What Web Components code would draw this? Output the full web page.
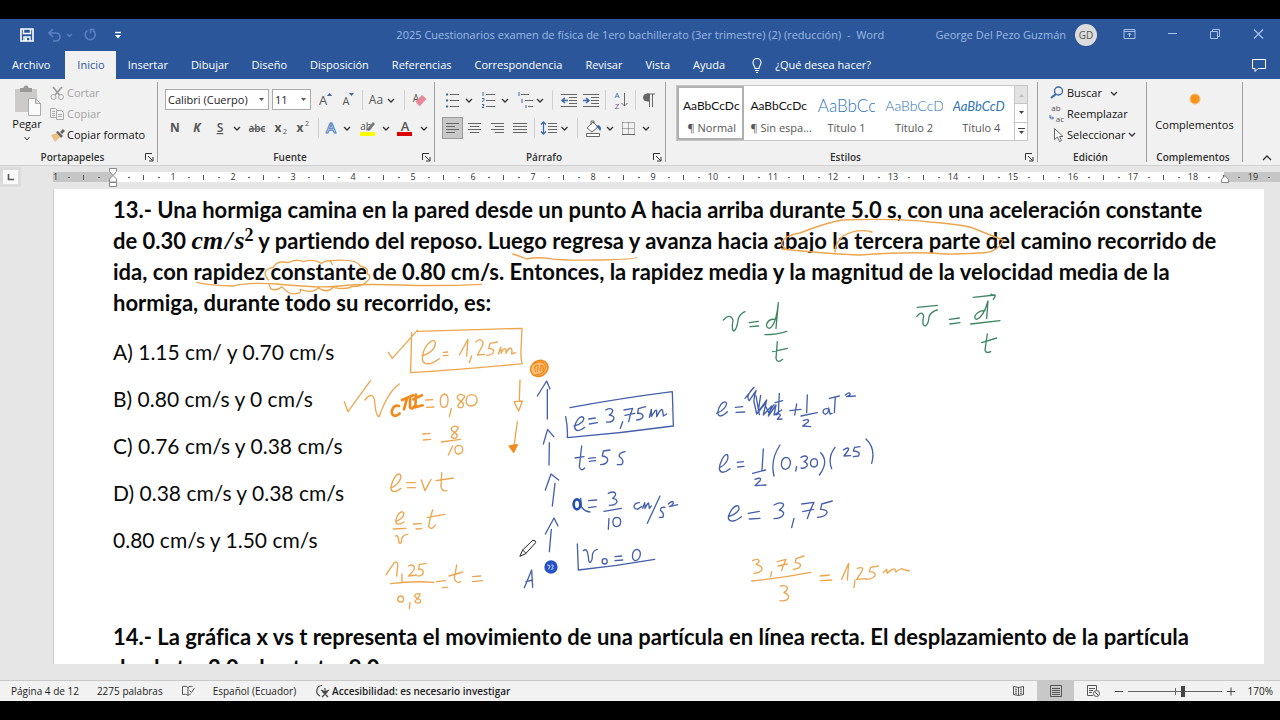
<!DOCTYPE html>
<html lang="es">
<head>
<meta charset="utf-8">
<title>Word</title>
<style>
  body { margin: 0; background: #000; font: 11px/16px "Open Sans", "Noto Sans", sans-serif; color: #222; }
</style>
</head>
<body>
<word-app></word-app>
<script>
const BASE = `
  * { box-sizing: border-box; }
  button { font: inherit; color: inherit; background: none; border: 0; margin: 0; padding: 0; display: flex; align-items: center; justify-content: center; flex: none; }
  svg { display: block; flex: none; overflow: visible; }
`;
function define(name, css, html) {
  customElements.define(name, class extends HTMLElement {
    constructor() {
      super();
      this.attachShadow({ mode: 'open' });
    }
    connectedCallback() {
      if (this.shadowRoot.childNodes.length) return;
      this.shadowRoot.innerHTML = `<style>${BASE}${css}</style>${typeof html === 'function' ? html(this) : html}`;
    }
  });
}
const svg = (w, h, body) => `<svg width="${w}" height="${h}" viewBox="0 0 ${w} ${h}" fill="none" stroke="#666" aria-hidden="true">${body}</svg>`;
const CHEV = (w = 12) => svg(w, 20, `<path d="M${w / 2 - 3} 9l3 3 3-3" stroke="#333" stroke-width="1.3"/>`);
const LETTER = (w, x, y, s, t, extra = '') => `<text x="${x}" y="${y}" font-size="${s}" fill="#555" stroke="none" text-anchor="middle" ${extra}>${t}</text>`;

/* A row of tool buttons. Each tool is [width, label, drawing]; a bar has no label. */
const tools = list => list.map(([w, label, body, cls]) =>
  label ? `<button type="button" class="${cls || ''}" aria-label="${label}">${body === 'v' ? CHEV(w) : svg(w, 20, body)}</button>`
        : svg(w, 20, `<path d="M${w >> 1}.5 0v20" stroke="#d0d0d0"/>`)).join('');

/* ---------- Title bar ---------- */
define('title-bar', `
  :host { display: flex; align-items: center; height: 32px; background: #2b579a; color: #9db8e4; }
  .quick { display: flex; align-items: center; padding-left: 18px; width: 345px; }
  .title { flex: 1; text-align: center; white-space: nowrap; }
  .user { display: flex; align-items: center; gap: 9px; padding-right: 11px; }
  .avatar { width: 22px; height: 22px; border-radius: 50%; background: #dcdcdc; color: #555; font-size: 10px; line-height: 22px; text-align: center; }
`, `
  <div class="quick">
    <button type="button" aria-label="Guardar">${svg(18, 18, `<path d="M3 3h12v12H3z" stroke="#fff" stroke-width="1.6"/><path d="M5.500 3v4.500h7V3M6 15v-4h6v4" stroke="#fff" stroke-width="1.400"/><path d="M7 12h2v3H7z" fill="#fff" stroke="none"/>`)}</button>
    <button type="button" aria-label="Deshacer">${svg(36, 18, `<path d="M17 3l-4 4 4 4M13 7h7a4 4 0 010 8h-3" stroke="#5a80bd" stroke-width="1.700"/>`)}</button>
    <button type="button" aria-label="Lista de deshacer">${svg(4, 18, `<path d="M-5 8l2.500 2.500L0 8" stroke="#5a80bd" stroke-width="1.400"/>`)}</button>
    <button type="button" aria-label="Rehacer">${svg(28, 18, `<path d="M11.500 4.500a5 5 0 105.500 0M18.500 3.500h-4v4" stroke="#5a80bd" stroke-width="1.600"/>`)}</button>
    <button type="button" aria-label="Personalizar">${svg(28, 18, `<path d="M11 6.500h6" stroke="#fff" stroke-width="1.400"/><path d="M11 9h6l-3 3.500z" fill="#fff" stroke="none"/>`)}</button>
  </div>
  <div class="title">2025 Cuestionarios examen de física de 1ero bachillerato (3er trimestre) (2) (reducción) &nbsp;-&nbsp; Word</div>
  <div class="user"><span>George Del Pezo Guzmán</span><span class="avatar">GD</span></div>
  <button type="button" aria-label="Opciones de la cinta">${svg(43, 24, `<path d="M16 6.500h11v9H16zM16 8.500h11M21.500 14v-4M19.500 12l2-2 2 2" stroke="#a9c2ea"/>`)}</button>
  <button type="button" aria-label="Minimizar">${svg(43, 24, `<path d="M17 10.500h9" stroke="#a9c2ea"/>`)}</button>
  <button type="button" aria-label="Restaurar">${svg(43, 24, `<path d="M16.500 8.500h7v7h-7zM18.500 8.500v-2h7v7h-2" stroke="#a9c2ea"/>`)}</button>
  <button type="button" aria-label="Cerrar">${svg(43, 24, `<path d="M17 6.500l9 9M26 6.500l-9 9" stroke="#a9c2ea" stroke-width="1.200"/>`)}</button>
`);

/* ---------- Tabs ---------- */
define('ribbon-tabs', `
  :host { display: flex; height: 28px; background: #2b579a; color: #fff; }
  nav { display: flex; flex: 1; }
  a { color: inherit; text-decoration: none; padding: 0 11px 0 12px; line-height: 28px; white-space: nowrap; }
  a:first-child { padding-right: 15px; }
  a.on { background: #f1f1f1; color: #2b579a; }
  .tell { display: flex; align-items: center; gap: 12px; margin-left: 15px; }
  .chat { width: 43px; }
`, `
  <nav>${['Archivo', 'Inicio', 'Insertar', 'Dibujar', 'Diseño', 'Disposición', 'Referencias', 'Correspondencia', 'Revisar', 'Vista', 'Ayuda']
    .map((t, i) => `<a href="#"${i === 1 ? ' class="on"' : ''}>${t}</a>`).join('')}
  <button type="button" class="tell">${svg(12, 18, `<path d="M4 12.500c0-2.500-2-3-2-6a4 4 0 018 0c0 3-2 3.500-2 6zM4 14.500h4M5 16.500h2" stroke="#fff" stroke-width="1.100"/>`)}<span>¿Qué desea hacer?</span></button></nav>
  <button type="button" class="chat" aria-label="Comentarios">${svg(18, 18, `<path d="M2.500 3.500h13v9H8l-3 3v-3H2.500z" stroke="#fff"/>`)}</button>
`);

/* ---------- Ribbon ---------- */
define('ribbon-group', `
  :host { display: flex; flex-direction: column; border-right: 1px solid #a0a0a0; margin: 3px 0; min-width: 0; }
  .body { flex: 1; min-height: 0; }
  footer { display: flex; height: 14px; align-items: center; padding-right: 3px; margin-bottom: -2px; }
  h2 { flex: 1; margin: 0; font-size: 10px; font-weight: 600; line-height: 14px; text-align: center; color: #333; }
`, el => `
  <div class="body"><slot></slot></div>
  <footer><h2>${el.getAttribute('caption')}</h2>${el.hasAttribute('launcher') ? `<button type="button" aria-label="Más opciones">${svg(9, 9, `<path d="M.5 7V.5H7M3 3l4.500 4.500M8 4v4H4" stroke="#333"/>`)}</button>` : ''}</footer>
`);

define('clipboard-tools', `
  :host { display: flex; padding-left: 8px; color: #111; white-space: nowrap; }
  .paste { flex-direction: column; width: 38px; }
  .paste span { line-height: 14px; }
  .list { display: flex; flex-direction: column; padding-left: 4px; }
  .list button { height: 21px; gap: 2px; justify-content: flex-start; }
  .off { color: #a3a3a3; }
`, `
  <button type="button" class="paste">${svg(28, 34, `<path d="M2 6h22v23H2z" fill="#cdcaca" stroke="none"/><path d="M7 9V5h3.500a2.500 2.500 0 015 0H19v4z" fill="#999" stroke="none"/><path d="M15.500 15.500h7l5 5v12h-12zM22.500 15.500v5h5" fill="#fafafa" stroke="#aaa"/>`)}<span>Pegar</span>${svg(12, 14, '<path d="M3.500 6l2.500 3 2.500-3" stroke="#333"/>')}</button>
  <div class="list">
    <button type="button" class="off">${svg(15, 16, `<path d="M3 2l6.500 8M12 2L5 10" stroke="#999" stroke-width="1.700"/><circle cx="3.500" cy="12" r="2.500" stroke="#aaa"/><circle cx="11" cy="12" r="2.500" stroke="#aaa"/>`)}<span>Cortar</span></button>
    <button type="button" class="off">${svg(15, 16, `<path d="M.5 2.500h5l2 2v7h-7zM2 5.500h3M2 7.500h3M2 9.500h3" stroke="#aaa"/><path d="M6.500 4.500h5l2 2v7h-7zM8 8.500h4M8 10.500h4" fill="#f1f1f1" stroke="#aaa"/>`)}<span>Copiar</span></button>
    <button type="button">${svg(15, 16, `<path d="M1 8l6-2 3 4-5 5z" fill="#ecc07e" stroke="none"/><path d="M6 5l2-1 5 5-2 2zM10 5l3-3 2 2-3 3z" fill="#666" stroke="none"/>`)}<span>Copiar formato</span></button>
  </div>
`);

define('font-tools', `
  :host { display: block; padding-left: 7px; }
  .row { display: flex; align-items: center; height: 21px; margin-top: 7px; }
  .combo { position: relative; margin-right: 3px; }
  .combo svg { position: absolute; right: 2px; top: 0; pointer-events: none; }
  select { appearance: none; font: inherit; color: #222; background: #fff; border: 1px solid #ababab; border-radius: 0; height: 21px; padding: 0 2px; display: block; }
  .family { width: 104px; }
  .size { width: 39px; }
`, `
  <div class="row">
    <div class="combo"><select class="family" aria-label="Fuente"><option>Calibri (Cuerpo)</option></select>${svg(10, 20, '<path d="M2 9h5l-2.500 3z" fill="#555" stroke="none"/>')}</div>
    <div class="combo"><select class="size" aria-label="Tamaño de fuente"><option>11</option></select>${svg(10, 20, '<path d="M2 9h5l-2.500 3z" fill="#555" stroke="none"/>')}</div>
    ${tools([
      [22, 'Aumentar tamaño', LETTER(22, 9, 15, 13, 'A') + '<path d="M13 6l2.500-3L18 6z" fill="#3b6aa8" stroke="none"/>'],
      [22, 'Reducir tamaño', LETTER(22, 10, 15, 11, 'A') + '<path d="M13 3h5l-2.500 3z" fill="#3b6aa8" stroke="none"/>'],
      [8], [18, 'Cambiar mayúsculas', LETTER(18, 10, 14, 12, 'Aa')], [14, 'Tipos de mayúsculas', 'v'], [12],
      [20, 'Borrar formato', LETTER(20, 6, 12, 10, 'A') + '<path d="M5 12l7-7 4.500 4-6.500 7H8z" fill="#e8899a" stroke="none"/><path d="M5 12l4 4" stroke="#fff"/>']
    ])}
  </div>
  <div class="row">
    ${tools([
      [21, 'Negrita', LETTER(21, 10, 14, 12, 'N', 'font-weight="700"')],
      [22, 'Cursiva', LETTER(22, 11, 14, 12, 'K', 'font-weight="700" font-style="italic"')],
      [22, 'Subrayado', LETTER(22, 12, 14, 12, 'S', 'font-weight="600" text-decoration="underline"')], [14, 'Tipos de subrayado', 'v'],
      [26, 'Tachado', LETTER(26, 13, 14, 10, 'abc', 'font-weight="600"') + '<path d="M5 11h16" stroke="#555"/>'],
      [20, 'Subíndice', LETTER(20, 8, 14, 12, 'x', 'font-weight="700"') + LETTER(20, 15, 16, 7, '2')],
      [24, 'Superíndice', LETTER(24, 10, 14, 12, 'x', 'font-weight="700"') + LETTER(24, 17, 8, 7, '2')],
      [8], [18, 'Efectos de texto', '<text x="9" y="15" font-size="15" font-weight="600" fill="#f4f9ff" stroke="#5282bd" text-anchor="middle">A</text>'], [14, 'Lista de efectos', 'v'],
      [26, 'Resaltado', LETTER(26, 12, 12, 10, 'ab') + '<path d="M12 12l7-8 2 2-6 7z" fill="#777" stroke="none"/><path d="M6 14h15v4H6z" fill="#ff0" stroke="none"/>'], [12, 'Color de resaltado', 'v'],
      [26, 'Color de fuente', LETTER(26, 13, 13, 13, 'A', 'font-weight="600"') + '<path d="M5 14h15v4H5z" fill="#d00" stroke="none"/>'], [12, 'Lista de colores', 'v']
    ])}
  </div>
`);

const lines = (xs, y0 = 5) => xs.map(([a, b], i) => `M${a} ${y0 + i * 3}.5H${b}`).join('');
define('paragraph-tools', `
  :host { display: block; padding-left: 7px; }
  .row { display: flex; align-items: center; height: 21px; margin-top: 7px; }
  .on { background: #c8c8c8; outline: 1px solid #999; outline-offset: -1px; height: 22px; }
`, `
  <div class="row">
    ${tools([
      [20, 'Viñetas', '<path d="M8 4.500h9M8 10.500h9M8 16.500h9"/><path d="M4 4.500h2M4 10.500h2M4 16.500h2" stroke="#3b6aa8" stroke-width="2"/>'], [14, 'Lista de viñetas', 'v'],
      [22, 'Numeración', '<path d="M10 4.500h9M10 10.500h9M10 16.500h9"/><path d="M7 2v4M6 8.500h2v2l-2 1M6 14.500h2l-1 2 1 1H6" stroke="#3b6aa8"/>'], [14, 'Lista de numeración', 'v'],
      [22, 'Lista multinivel', '<path d="M9 4.500h8M13 10.500h8M16 16.500h5"/><path d="M7 2v4M10 9v4M14 15v3" stroke="#3b6aa8"/>'], [12, 'Listas multinivel', 'v'],
      [12], [22, 'Disminuir sangría', '<path d="M3 4.500h16M11 7.500h8M11 10.500h8M11 13.500h8M3 16.500h16"/><path d="M10 10.500H5M7 8l-3 2.500L7 13" stroke="#3b6aa8" stroke-width="1.600"/>'],
      [22, 'Aumentar sangría', '<path d="M3 4.500h16M11 7.500h8M11 10.500h8M11 13.500h8M3 16.500h16"/><path d="M3 10.500h5M6 8l3 2.500L6 13" stroke="#3b6aa8" stroke-width="1.600"/>'],
      [6], [24, 'Ordenar', LETTER(24, 9, 8, 8, 'A', 'style="fill:#3b6aa8"') + LETTER(24, 9, 19, 8, 'Z', 'style="fill:#76589a"') + '<path d="M16.500 3v13M13.500 13l3 3 3-3"/>'],
      [6], [22, 'Mostrar todo', '<path d="M9 4h8M11.500 4v13M14.500 4v13" /><path d="M11 4H9a3 3 0 000 7h2z" fill="#666"/>']
    ])}
  </div>
  <div class="row">
    ${tools([
      [21, 'Alinear a la izquierda', `<path d="${lines([[4, 17], [4, 13], [4, 17], [4, 13]])}"/>`, 'on'],
      [23, 'Centrar', `<path d="${lines([[5, 18], [7, 16], [5, 18], [7, 16]])}"/>`],
      [23, 'Alinear a la derecha', `<path d="${lines([[5, 18], [9, 18], [5, 18], [9, 18]])}"/>`],
      [22, 'Justificar', `<path d="${lines([[4, 18], [4, 18], [4, 18], [4, 18]])}"/>`],
      [6], [21, 'Espaciado', '<path d="M11 5.500h9M11 8.500h9M11 11.500h9M11 14.500h9"/><path d="M6.500 4v12M4 6.500L6.500 4 9 6.500M4 13.500L6.500 16 9 13.500" stroke="#3b6aa8" stroke-width="1.300"/>'], [13, 'Opciones de espaciado', 'v'],
      [12], [20, 'Sombreado', '<path d="M4 10l6-6 5 5-6 5z" fill="#fff"/><path d="M8 7V3h3v3"/><path d="M15 7c3 1 4 4 2 6-1-2-2-3-4-4z" fill="#3b6aa8" stroke="none"/><path d="M3.500 15.500h13v3h-13z" fill="#fff"/>'], [14, 'Colores de sombreado', 'v'],
      [22, 'Bordes', '<path d="M5.500 4.500h12M5.500 10.500h12M5.500 4.500v12M11.500 4.500v12M17.500 4.500v12" stroke-dasharray="1 1"/><path d="M5 16.500h13"/>'], [14, 'Tipos de borde', 'v']
    ])}
  </div>
`);

define('style-gallery', `
  :host { display: flex; margin: 3px 9px 0 10px; height: 56px; background: #fff; border: 1px solid #c6c6c6; }
  .items { display: flex; flex: 1; min-width: 0; }
  .items button { flex: 1 1 0; min-width: 0; flex-direction: column; align-items: stretch; padding: 3px 4px 0 6px; overflow: hidden; white-space: nowrap; }
  .items .on { outline: 2px solid #b0b0b0; outline-offset: -2px; }
  .preview { height: 28px; line-height: 28px; overflow: hidden; text-align: left; color: #111; font-family: Lato, sans-serif; font-size: 12px; }
  .name { height: 18px; line-height: 16px; color: #555; text-align: center; }
  .t1 { color: #2e74b5; font-size: 17px; font-weight: 300; }
  .t2 { color: #2e74b5; font-size: 14px; font-weight: 300; }
  .t4 { color: #2e74b5; font-size: 13px; font-style: italic; }
  .scroll { display: flex; flex-direction: column; width: 13px; border-left: 1px solid #c6c6c6; }
  .scroll button { flex: 1; }
  .scroll button + button { border-top: 1px solid #c6c6c6; }
  .scroll button:first-child { background: #e3e3e3; }
`, `
  <div class="items">${[['', 'AaBbCcDc', '¶ Normal'], ['', 'AaBbCcDc', '¶ Sin espa...'], ['t1', 'AaBbCc', 'Título 1'], ['t2', 'AaBbCcD', 'Título 2'], ['t4', 'AaBbCcD', 'Título 4']]
    .map(([c, p, n], i) => `<button type="button"${i ? '' : ' class="on"'}><span class="preview ${c}">${p}</span><span class="name">${n}</span></button>`).join('')}</div>
  <div class="scroll">
    <button type="button" aria-label="Arriba">${svg(7, 6, '<path d="M1 5h5L3.500 2z" fill="#bbb" stroke="none"/>')}</button>
    <button type="button" aria-label="Abajo">${svg(7, 6, '<path d="M1 1h5L3.500 4z" fill="#444" stroke="none"/>')}</button>
    <button type="button" aria-label="Más estilos">${svg(7, 8, '<path d="M0 1.500h7" stroke="#444"/><path d="M1 4h5L3.500 7z" fill="#444" stroke="none"/>')}</button>
  </div>
`);

define('edit-tools', `
  :host { display: flex; flex-direction: column; padding-left: 12px; color: #111; white-space: nowrap; }
  button { height: 21px; gap: 3px; justify-content: flex-start; }
`, `
  <button type="button">${svg(14, 16, '<circle cx="8.500" cy="6" r="4" stroke="#3b6aa8" stroke-width="1.400"/><path d="M6 9l-5 4" stroke="#3b6aa8" stroke-width="2.200"/>')}<span>Buscar</span>${CHEV(18)}</button>
  <button type="button">${svg(14, 16, LETTER(14, 6, 5, 8, 'ab') + LETTER(14, 10, 16, 8, 'ac') + '<path d="M0 9v3h3M2 10.500l1.500 1.500L2 13.500" stroke="#3b6aa8"/>')}<span>Reemplazar</span></button>
  <button type="button">${svg(14, 16, '<path d="M4.500 1.500v11l3-2.500 2 4.500 2-1-2-4h3.500z" fill="#fff"/>')}<span>Seleccionar</span>${svg(8, 16, '<path d="M1 6l3 3 3-3" stroke="#333" stroke-width="1.300"/>')}</button>
`);

define('addin-tools', `
  :host { display: flex; justify-content: center; color: #111; }
  button { flex-direction: column; }
`, `<button type="button">${svg(20, 35, '<circle cx="10" cy="17" r="5" fill="#f7931e" stroke="#fac07a"/>')}<span>Complementos</span></button>`);

define('word-ribbon', `
  :host { display: grid; grid-template-columns: 158px 277px 231px minmax(300px, 1fr) 109px 96px 37px; height: 87px; background: #f1f1f1; border-bottom: 1px solid #d0d0d0; }
  .fold { align-self: end; height: 14px; padding-left: 10px; }
`, `
  <ribbon-group caption="Portapapeles" launcher><clipboard-tools></clipboard-tools></ribbon-group>
  <ribbon-group caption="Fuente" launcher><font-tools></font-tools></ribbon-group>
  <ribbon-group caption="Párrafo" launcher><paragraph-tools></paragraph-tools></ribbon-group>
  <ribbon-group caption="Estilos" launcher><style-gallery></style-gallery></ribbon-group>
  <ribbon-group caption="Edición"><edit-tools></edit-tools></ribbon-group>
  <ribbon-group caption="Complementos"><addin-tools></addin-tools></ribbon-group>
  <button type="button" class="fold" aria-label="Contraer la cinta">${svg(12, 12, '<path d="M2 8l4-4 4 4" stroke="#333" stroke-width="1.300"/>')}</button>
`);

/* ---------- Ruler ---------- */
define('word-ruler', `
  :host { position: relative; display: flex; align-items: center; height: 22px; background: #e6e6e6; }
  .tab { width: 21px; height: 20px; background: #fafafa; border: 3px solid #dcdcdc; display: grid; place-items: center; margin-right: 32px; flex: none; }
  .scale { flex: 1; min-width: 0; display: flex; overflow-x: clip; overflow-y: visible; height: 10px; background: #fff; }
  .cm { flex: none; width: 60px; height: 10px; display: flex;
    background: linear-gradient(#555, #555) 30px 3px / 1px 5px no-repeat, linear-gradient(#666, #666) 15px 5px / 2px 1px no-repeat, linear-gradient(#666, #666) 45px 5px / 2px 1px no-repeat; }
  .cm span { width: 14px; margin-left: -7px; text-align: center; font-size: 9px; line-height: 10px; color: #333; }
  .cm.out { background-color: #c6c6c6; }
  .cm.edge { background-image: linear-gradient(#555, #555), linear-gradient(#666, #666), linear-gradient(#666, #666), linear-gradient(90deg, transparent 31px, #c6c6c6 31px);
    background-size: 1px 5px, 2px 1px, 2px 1px, 60px 10px; background-position: 30px 3px, 15px 5px, 45px 5px, 0 0; }
  .cm.first span { margin-left: 0; text-align: left; }
  .left, .right { position: absolute; }
  .left { left: 108px; top: 2px; }
  .right { right: 50px; top: 9px; }
`, () => {
  let s = '<div class="cm out first"><span>1</span></div><div class="cm"></div>';
  for (let i = 1; i < 18; i++) s += `<div class="cm"><span>${i}</span></div>`;
  s += '<div class="cm edge"><span>18</span></div><div class="cm out"><span>19</span></div>';
  return `
  <div class="tab">${svg(8, 8, '<path d="M1.500 1v5.500H7" stroke="#555" stroke-width="1.600"/>')}</div>
  <div class="scale">${s}</div>
  <div class="left">${svg(10, 20, '<path d="M1.500.5h7v3l-3.500 4-3.500-4zM1.500 14v-3L5 7.500 8.500 11v3zM1.500 14.500h7v4h-7z" fill="#fff" stroke="#888"/>')}</div>
  <div class="right">${svg(10, 10, '<path d="M1.500 7.500v-3L5 .5l3.500 4v3z" fill="#fff" stroke="#888"/>')}</div>`;
});

/* ---------- Pen strokes over the page. Groups are drawn on a grid of thirds of a pixel. ---------- */
const O = '#eda54e', B = '#4560ab', G = '#3f8564';
const ink = (x, y, color, d, extra = '') => `<g transform="translate(${x} ${y}) scale(.33333)" stroke="${color}" stroke-width="4">${`<path d="${d}"/>`}${extra}</g>`;
define('pen-ink', `
  :host { position: absolute; top: 0; left: 0; pointer-events: none; }
  svg { stroke-linecap: round; stroke-linejoin: round; }
`, `<svg width="1210" height="475" viewBox="54 189 1210 475" fill="none" role="img" aria-label="Anotaciones a mano">
${ink(100, 190, O, `M290 277Q330 287 400 288Q450 276 530 282Q660 295 720 288T900 285T1145 283
 M505 270Q480 240 520 232Q530 210 565 218Q590 205 610 215Q640 205 665 220Q690 202 697 224M690 212Q770 205 780 228Q810 235 800 250Q820 260 800 275Q790 290 755 290Q740 300 700 292Q680 312 655 293Q640 312 600 298Q605 310 590 310Q570 318 545 290Q530 305 512 296L506 280`)}
${ink(500, 190, O, 'M38 192Q60 198 80 207Q110 200 150 206T300 210T410 202')}
<path stroke="${O}" stroke-width="1.400" d="M788 250C773 242 788 235 800 233Q825 223 842 220Q900 218 930 222Q955 224 970 227L1003 240C1000 248 994 253 980 253Q960 254 945 254Q915 251 860 255Q830 254 782 249M872 232Q858 228 843 236Q834 245 835 252"/>
${ink(500, 190, G, 'M670 390Q690 368 699 390Q694 422 702 423Q711 418 715 385Q722 370 735 365M748 398L775 394M750 410L776 408M824 388C803 385 790 412 808 415Q828 408 835 338L828 415M795 434Q830 434 860 424M832 455L828 505Q832 522 848 508M818 485L862 475')}
${ink(860, 190, G, 'M172 352L232 346M170 380Q185 360 191 378Q184 408 196 408Q206 402 207 380Q214 364 232 360M268 388L298 384M270 402L300 398M340 322L405 315M393 312L406 318L400 328M375 362C352 360 335 385 350 388Q370 382 384 333L380 385M332 402L420 392M382 432L375 480Q378 492 392 485M365 458L410 444')}
${ink(330, 320, O, `M175 97L187 115L262 31M245 38L242 155M262 34Q400 30 576 25L573 90Q572 120 577 131Q400 148 242 158
 M277 108C300 100 318 85 316 68C312 52 285 70 278 105C272 135 295 140 328 116M340 97L353 96M340 107L354 106M388 105L414 58L410 108M425 108L418 128M438 66C450 52 464 62 457 78L442 105L464 103M502 66L480 70L476 86C497 84 497 104 470 106M505 102L512 82L514 100C520 82 530 80 528 100C535 82 545 80 546 92L545 102L556 98
 M570 180L568 240M552 245L577 243L566 273ZM562 305L552 378M43 245L54 275L122 181
 M105 240C120 218 132 225 134 245C136 270 140 290 147 290C158 262 175 215 208 192
 M287 240L308 239M290 262L312 261M343 222C326 226 328 262 342 262C358 258 358 224 343 222M364 265L358 290M404 228C384 215 374 235 390 242C406 250 402 268 387 262C374 255 404 240 404 228M425 224C405 224 402 258 422 258C446 256 448 224 425 224
 M278 342L300 340M280 360L302 358M385 322C370 312 355 328 370 335C390 345 380 358 368 354C355 348 385 335 385 322M334 366L392 358M368 378L355 405M386 376C370 378 372 402 386 402C402 398 402 376 386 376
 M182 505C200 498 215 480 212 466C206 454 192 470 184 495C178 518 195 520 213 505M230 488L256 488M232 503L256 503M274 480L285 512L303 478M335 458L333 500Q335 515 350 512M318 482L370 474
 M197 605C212 598 225 590 221 578C213 570 200 585 198 600C196 615 208 616 222 606M190 627L228 625M197 648Q205 642 207 668Q214 676 215 656Q220 644 233 643M250 612L274 611M258 627L275 626M308 570Q298 600 296 620Q305 632 316 615M292 592L345 583
 M168 765L193 728Q205 722 203 740L200 768M216 762L216 785M236 738C248 730 258 740 250 752L236 768L260 765M288 730L268 734L266 748C285 745 285 768 264 768M182 791Q250 782 312 787M212 828C200 830 200 846 212 846C224 846 224 830 212 828M240 848L238 866M270 822C255 818 248 830 262 835C280 842 270 852 258 848C248 842 272 832 270 822M320 785L347 782M337 803L353 802M380 735L373 775Q378 792 392 785M357 768L398 756M428 770L452 768M428 785L458 782`,
 `<path stroke="#f08a1c" stroke-width="8" d="M207 258C190 252 181 275 188 284C195 292 205 284 209 280M216 240L250 226M230 238L222 268M240 235L240 262Q246 270 252 260M250 238L276 226M258 224L256 262L278 256"/>
  <path d="M538 378L562 374L551 397Z" fill="#f08a1c" stroke="#f08a1c"/>
  <ellipse cx="628" cy="145" rx="27" ry="23" transform="rotate(-30 628 145)" fill="#f9c27c" stroke="#f08a1c" stroke-width="5"/>
  <path stroke="#f08a1c" stroke-width="4" d="M616 154C610 142 618 130 625 138L622 154M631 152L633 136Q642 134 639 152M610 132Q638 116 648 140Q642 166 616 164"/>`)}
${ink(330, 320, B, 'M652 297L652 208M622 228L650 183L660 207M657 435L658 368M640 372L653 328L671 350M667 558L675 490M646 510L663 462L686 480M658 695L664 628M646 642L672 594L684 618M583 803L605 750L608 802M588 785L608 780',
 `<circle cx="663" cy="741" r="18" fill="#2552c4" stroke="#2552c4"/><path stroke="#dce6ff" stroke-width="3" d="M653 735L660 738L656 747M665 735Q674 734 667 742Q674 746 664 748"/>
  <path d="M570 708L578 690L608 661Q618 660 617 668L588 700ZM578 690L588 700" fill="#fff" stroke="#222" stroke-width="3"/>`)}
${ink(510, 340, B, `M180 203Q330 175 487 155L490 258Q330 280 172 293Q174 265 167 230M192 258C215 252 225 240 220 232C210 225 195 245 194 262C196 275 210 275 224 262M236 237L256 234M238 252L262 248M287 210C305 200 318 212 298 225C322 228 312 248 290 246M338 245L331 265M342 210L368 205Q360 225 356 245M345 226L374 220M407 200L385 206L383 220C405 218 405 238 380 240M418 232L424 208L424 230Q438 205 440 212L440 230Q455 200 458 212L460 228L470 222
 M215 318L208 380Q212 396 224 384M195 354L222 350M236 355L256 353M238 364L257 362M300 330L280 333L277 348C300 350 298 372 272 374M345 335Q325 338 328 350Q345 360 335 374L322 374M212 475L214 500Q222 514 240 516M236 482L260 480M236 503L258 500M295 460C315 450 325 462 308 475C330 478 322 496 298 496M282 514L334 505M297 535L295 568M320 532C304 534 306 560 320 560C336 558 336 532 320 532M388 488C372 488 365 505 382 508L395 500M398 505L404 488L405 505Q415 485 416 490L418 505L424 498M450 468L412 550M465 502Q450 500 452 512Q465 520 458 532L448 532M475 492Q490 478 490 490Q485 498 478 500L503 494
 M202 612L205 690Q320 678 434 658M220 632Q232 622 235 650Q236 672 242 666Q248 660 247 645Q250 630 262 628M284 656C274 656 274 672 284 672C294 672 294 656 284 656M315 650L335 648M315 662L338 660M380 628C364 632 364 660 376 662C394 658 396 630 380 628`,
 '<ellipse cx="201" cy="493" rx="10" ry="15" stroke="#2552a8" stroke-width="8"/>')}
${ink(700, 370, B, `M50 130C70 122 84 105 78 97C66 90 55 115 54 125C52 142 65 142 82 125M106 112L128 110M108 127L134 126M135 85L162 52Q135 80 148 92L168 62Q158 90 164 104L170 132L200 90L190 135L215 108L205 138L228 105L222 135L245 120M168 78L178 134M182 76L174 128L194 102L206 128L222 104M238 70L235 130M225 98L248 92M228 135Q240 128 241 136L232 148L246 147
 M270 122L303 118M290 102L284 135M322 75L320 128M303 138L352 128M310 152Q328 145 325 155L308 168L332 170M382 116C366 114 366 134 378 132Q386 128 386 114L390 132L396 130M406 82L403 128M388 85L418 78M436 75Q452 62 450 75L440 80L466 78
 M60 292C78 285 88 265 82 254C70 250 58 285 58 297C62 312 75 308 90 296M112 277L130 275M113 291L132 289M190 237L186 300M158 310L197 300M165 328Q187 320 180 332L165 347L198 345M240 225Q210 270 222 318M258 262C240 266 240 298 256 298C276 294 276 262 258 262M290 290L287 303M303 262C322 252 330 265 312 275C332 282 318 298 303 294M342 266C328 270 328 290 342 291C356 290 356 266 342 266M362 248Q388 275 358 315M405 232Q382 262 395 296M430 240Q448 228 445 240L432 258L452 257M480 230L464 232L460 243Q484 245 475 258L460 260M498 207Q528 235 515 280
 M85 440C110 432 122 420 115 408C100 402 85 435 85 445C90 458 105 455 124 440M145 430L178 424M148 447L180 445M222 405C245 392 264 402 238 420C262 425 250 445 222 446M282 445L275 473M305 402L342 397Q330 420 322 446M308 425L340 418M397 393L365 402L362 418C392 418 385 440 352 442`)}
${ink(700, 370, O, 'M158 572C178 562 184 575 168 583C195 590 190 608 162 610M215 605L212 620M232 575L258 568Q248 590 245 602M235 588L262 582M312 558L288 566L286 578C310 578 305 596 280 598M155 633Q240 625 332 607M242 648C262 643 270 655 252 668C275 675 268 695 240 692M360 618L388 615M362 632L395 630M425 628L446 580L442 630M465 630L462 652M472 595Q495 588 485 605L470 628L498 626M535 588L512 592L508 605C535 605 530 625 500 628M550 608L560 598L562 610Q580 592 585 598L588 606Q605 592 608 598L628 603')}
</svg>`);

/* ---------- Page ---------- */
define('word-page', `
  :host { display: block; position: relative; background: #fff; overflow: hidden; padding: 5px 0 0 59px; border-left: 1px solid #ccc; color: #0a0a0a; font: 21px/31px Lato, "Open Sans", sans-serif; font-variant-ligatures: none; }
  p { margin: 0 0 16px; white-space: nowrap; }
  .q { font-size: 22px; font-weight: 700; margin-bottom: 18px; }
  .gap { margin-bottom: 66px; }
  i { font: italic 700 26px/25px "Liberation Serif", serif; }
  i span { padding: 0 2px; }
  sup { font: 700 18px/10px "Liberation Serif", serif; }
`, `
  <p class="q">13.- Una hormiga camina en la pared desde un punto A hacia arriba durante 5.0 s, con una aceleración constante<br>
  de 0.30 <i>cm<span>/</span>s</i><sup>2</sup> y partiendo del reposo. Luego regresa y avanza hacia abajo la tercera parte del camino recorrido de<br>
  ida, con rapidez constante de 0.80 cm/s. Entonces, la rapidez media y la magnitud de la velocidad media de la<br>
  hormiga, durante todo su recorrido, es:</p>
  <p>A) 1.15 cm/ y 0.70 cm/s</p>
  <p>B) 0.80 cm/s y 0 cm/s</p>
  <p>C) 0.76 cm/s y 0.38 cm/s</p>
  <p>D) 0.38 cm/s y 0.38 cm/s</p>
  <p class="gap">0.80 cm/s y 1.50 cm/s</p>
  <p class="q">14.- La gráfica x vs t representa el movimiento de una partícula en línea recta. El desplazamiento de la partícula<br>
  desde t = 2.0 s hasta t = 9.0 s</p>
  <pen-ink></pen-ink>
`);

/* ---------- Status bar ---------- */
define('status-bar', `
  :host { display: flex; align-items: center; height: 21px; background: #f2f2f2; border-top: 1px solid #c8c8c8; padding: 0 7px 0 11px; font-size: 10px; white-space: nowrap; }
  .info { display: flex; align-items: center; gap: 18px; flex: 1; }
  .acc { display: flex; align-items: center; gap: 2px; font-weight: 600; }
  .view { width: 37px; height: 20px; }
  .on { background: #c8c8c8; }
  .zoom { display: flex; align-items: center; gap: 4px; margin-left: 4px; }
  input { appearance: none; width: 94px; height: 14px; margin: 0; background: linear-gradient(#666, #666) 0 7px / 100% 1px no-repeat, linear-gradient(#666, #666) 47px 4px / 1px 7px no-repeat; }
  input::-webkit-slider-thumb { appearance: none; width: 4px; height: 11px; background: #444; }
  output { width: 34px; text-align: right; }
`, `
  <div class="info">
    <span>Página 4 de 12</span><span>2275 palabras</span>
    <button type="button" aria-label="Revisión">${svg(14, 14, '<path d="M7 3.500C5 2 3 2 1.500 2.500v8c2-.5 4-.5 5.500 1 1-1 2-1.500 3-1.500M7 3.500v8M7 3.500c1-1 3-1.500 4.500-1M8.500 6.500l2 2 3-4.500" stroke="#555"/>')}</button>
    <span>Español (Ecuador)</span>
    <span class="acc">${svg(16, 16, '<path d="M8 2.500A5.500 5.500 0 006 13M8 8l6 6M14 8l-6 6M11 5v4M7 7l4 2 4-2" stroke="#444" stroke-width="1.200"/>')}Accesibilidad: es necesario investigar</span>
  </div>
  <button type="button" class="view" aria-label="Modo de lectura">${svg(14, 14, '<path d="M1.500 2.500l5 1 5-1v8l-5 1-5-1zM6.500 3v9M3 5l2 .5M3 7l2 .5M3 9l2 .5M10 5l-2 .5M10 7l-2 .5M10 9l-2 .5" stroke="#555"/>')}</button>
  <button type="button" class="view on" aria-label="Diseño de impresión">${svg(14, 14, '<path d="M1.500 1.500h11v11h-11zM3 4.500h8M3 6.500h8M3 8.500h8M3 10.500h8" stroke="#555"/>')}</button>
  <button type="button" class="view" aria-label="Diseño web">${svg(14, 14, '<path d="M7 11.500H1.500v-10h9V6M3 4.500h6M3 6.500h4M3 8.500h3" stroke="#555"/><circle cx="10.500" cy="9.500" r="3" stroke="#555"/><path d="M9 8l3 3" stroke="#555"/>')}</button>
  <div class="zoom">
    <button type="button" aria-label="Alejar">${svg(9, 14, '<path d="M0 7.500h8" stroke="#444"/>')}</button>
    <input type="range" min="10" max="270" value="162" aria-label="Zoom">
    <button type="button" aria-label="Acercar">${svg(9, 14, '<path d="M1 7.500h8M5 3.500v8" stroke="#444"/>')}</button>
    <output>170%</output>
  </div>
`);

define('word-app', `
  :host { display: flex; flex-direction: column; height: 100vh; box-sizing: border-box; padding: 19px 0; }
  .desk { flex: 1; min-height: 0; display: grid; background: #e6e6e6; padding: 1px 16px 16px 53px; overflow: hidden; }
  word-page { min-height: 0; }
  title-bar, ribbon-tabs, word-ribbon, word-ruler, status-bar { flex: none; }
`, `
  <title-bar></title-bar>
  <ribbon-tabs></ribbon-tabs>
  <word-ribbon></word-ribbon>
  <word-ruler></word-ruler>
  <main class="desk"><word-page></word-page></main>
  <status-bar></status-bar>
`);
</script>
</body>
</html>
